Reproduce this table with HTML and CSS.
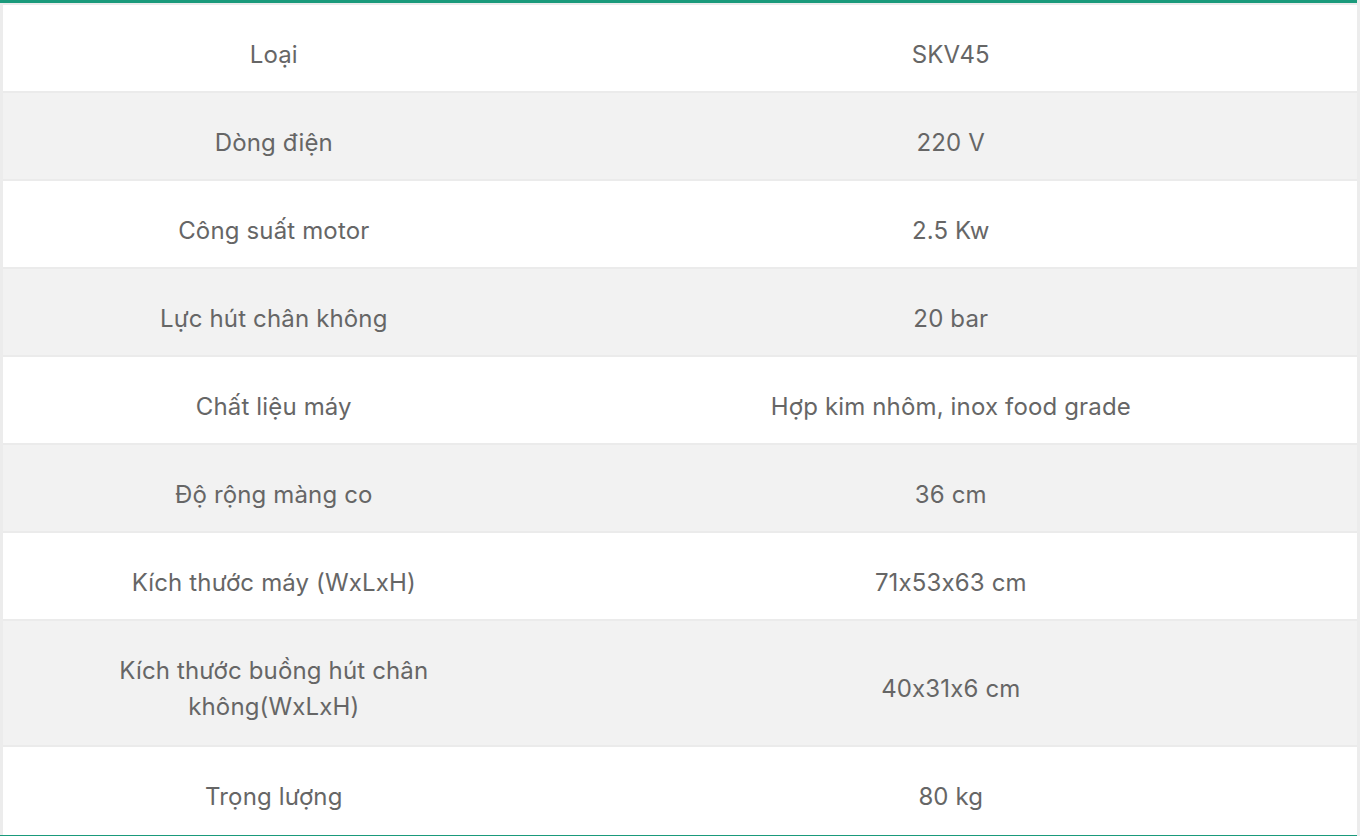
FILE: index.html
```html
<!DOCTYPE html>
<html lang="vi">
<head>
<meta charset="utf-8">
<title>Thông số kỹ thuật</title>
<link rel="stylesheet" href="styles.css">
</head>
<body>
<div class="spec-wrap">
  <table class="spec">
    <colgroup><col class="c-name"><col class="c-value"></colgroup>
    <tbody>
      <tr><td>Loại</td><td>SKV45</td></tr>
      <tr><td>Dòng điện</td><td>220 V</td></tr>
      <tr><td>Công suất motor</td><td>2.5 Kw</td></tr>
      <tr><td>Lực hút chân không</td><td>20 bar</td></tr>
      <tr><td>Chất liệu máy</td><td>Hợp kim nhôm, inox food grade</td></tr>
      <tr><td>Độ rộng màng co</td><td>36 cm</td></tr>
      <tr><td>Kích thước máy (WxLxH)</td><td>71x53x63 cm</td></tr>
      <tr class="tall"><td>Kích thước buồng hút chân không(WxLxH)</td><td>40x31x6 cm</td></tr>
      <tr class="last"><td>Trọng lượng</td><td>80 kg</td></tr>
    </tbody>
  </table>
</div>
</body>
</html>
```
FILE: styles.css
```css
html, body {
  margin: 0;
  padding: 0;
  background: #ececec;
}
body {
  font-family: Inter, "Noto Sans", "Liberation Sans", sans-serif;
  color: #666666;
}
.spec-wrap {
  width: 1357px;
  border-top: 3px solid #1a9a7b;
  border-bottom: 3px solid #1a9a7b;
  background: #ececec;
}
.spec {
  width: 1354px;
  margin-left: 3px;
  border-collapse: collapse;
  table-layout: fixed;
}
.c-name { width: 40%; }
.c-value { width: 60%; }
.spec td {
  border-top: 2px solid #ebebeb;
  padding: 32px 50px 18px;
  text-align: center;
  vertical-align: middle;
  font-size: 24px;
  line-height: 36px;
  letter-spacing: 0.15px;
}
.spec tr:nth-child(odd) td { background: #ffffff; }
.spec tr:nth-child(even) td { background: #f2f2f2; }
.spec tr.tall td { padding-bottom: 20px; }
.spec tr.last td { padding-bottom: 20px; }
```
